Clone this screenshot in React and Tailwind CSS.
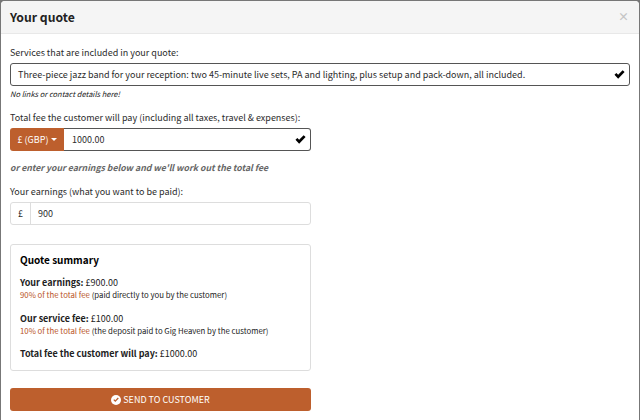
import React from "react";

const font = "font-['Noto_Sans_CJK_SC','Noto_Sans',sans-serif]";

function Check() {
  return (
    <svg viewBox="0 0 14 12" className="w-[11px] h-[9px] fill-black">
      <path d="M0.3 6.4 L2.8 3.9 L5.2 6.3 L11.2 0.2 L13.8 2.8 L5.2 11.6 Z" />
    </svg>
  );
}

function CheckCircle() {
  return (
    <svg viewBox="0 0 12 12" className="w-[10px] h-[10px]">
      <circle cx="6" cy="6" r="6" fill="white" />
      <path d="M2.8 6.1 L5.1 8.4 L9.3 4.2 L8.2 3.1 L5.1 6.2 L3.9 5 Z" fill="#bd5f2d" />
    </svg>
  );
}

function Summary() {
  return (
    <div className="w-[301px] h-[127px] mt-[19px] border border-[#dddddd] rounded-[3px] pl-[9px] pt-[8px] text-[#222]">
      <h3 className="text-[10px] leading-[14px] font-bold text-black">Quote summary</h3>
      <p className="mt-[9px] text-[9px] leading-[14px]">
        <b>Your earnings:</b> £900.00
      </p>
      <p className="text-[7.8px] leading-[10px]">
        <span className="text-[#b9541f]">90% of the total fee</span> (paid directly to you by the customer)
      </p>
      <p className="mt-[12px] text-[9px] leading-[14px]">
        <b>Our service fee:</b> £100.00
      </p>
      <p className="text-[7.8px] leading-[10px]">
        <span className="text-[#b9541f]">10% of the total fee</span> (the deposit paid to Gig Heaven by the customer)
      </p>
      <p className="mt-[11px] text-[9px] leading-[14px]">
        <b>Total fee the customer will pay:</b> £1000.00
      </p>
    </div>
  );
}

export default function App() {
  return (
    <div className={`${font} h-[420px] w-[640px] overflow-hidden bg-[#777] pl-[1px] pt-px`}>
      <div className="w-[638px] h-[440px] bg-white rounded-t-[4px]">
        {/* header */}
        <div className="h-[33px] bg-[#f5f5f5] border-b border-[#e8e8e8] rounded-t-[4px] flex items-center justify-between pl-[9px] pr-[10px]">
          <h2 className="text-[12.2px] font-bold text-[#222]">Your quote</h2>
          <span className="text-[11px] font-bold text-[#c4c4c4] leading-none mb-[2px]">×</span>
        </div>

        <div className="pl-[9px] pr-[9px] text-[#2b2b2b]">
          <label className="block mt-[12px] text-[9px] leading-[14px]">Services that are included in your quote:</label>
          <div className="mt-[3px] w-[620px] h-[23px] border border-[#555] rounded-[3px] flex items-center justify-between pl-[7px] pr-[4px] text-[9px]">
            <span>Three-piece jazz band for your reception: two 45-minute live sets, PA and lighting, plus setup and pack-down, all included.</span>
            <Check />
          </div>
          <p className="mt-[3px] text-[7.5px] leading-[10px] italic text-[#222]">No links or contact details here!</p>

          <label className="block mt-[12px] text-[9px] leading-[14px]">Total fee the customer will pay (including all taxes, travel &amp; expenses):</label>
          <div className="mt-[3px] w-[301px] h-[23px] flex text-[9px]">
            <div className="w-[54px] pl-px bg-[#bd5f2d] text-white rounded-l-[3px] flex items-center justify-center gap-[3px]">
              £ (GBP)
              <span className="w-0 h-0 border-x-[3px] border-x-transparent border-t-[3px] border-t-white" />
            </div>
            <div className="flex-1 border border-l-0 border-[#555] rounded-r-[3px] flex items-center justify-between pl-[8px] pr-[4px]">
              <span>1000.00</span>
              <Check />
            </div>
          </div>

          <p className="mt-[11px] text-[8.7px] leading-[12px] font-bold italic text-[#666]">or enter your earnings below and we'll work out the total fee</p>

          <label className="block mt-[11px] text-[9px] leading-[14px]">Your earnings (what you want to be paid):</label>
          <div className="mt-[3px] w-[301px] h-[23px] border border-[#dddddd] rounded-[3px] flex items-center text-[9px]">
            <span className="w-[20px] h-full border-r border-[#dddddd] flex items-center justify-center">£</span>
            <span className="pl-[7px]">900</span>
          </div>

          <Summary />

          <button className="mt-[17px] w-[301px] h-[23px] pt-px bg-[#bd5f2d] text-white rounded-[3px] flex items-center justify-center gap-[2px] text-[9px]">
            <CheckCircle />
            SEND TO CUSTOMER
          </button>
        </div>
      </div>
    </div>
  );
}
